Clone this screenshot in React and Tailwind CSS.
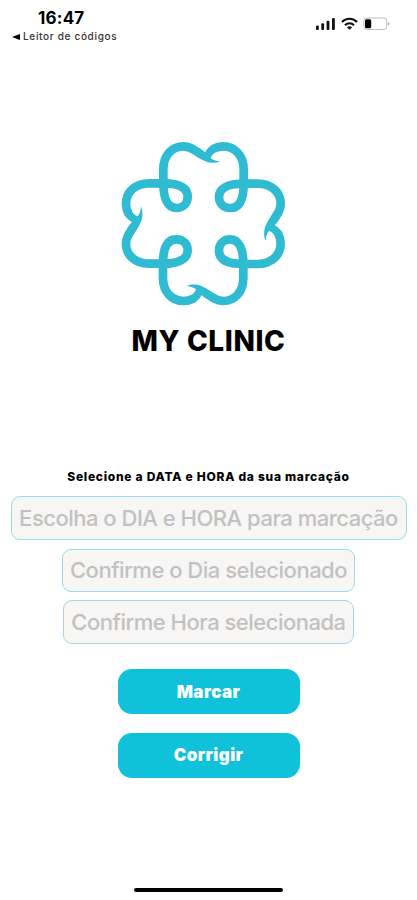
const StatusBar = () => {
  return (
    <header className="h-[48px] flex justify-between pl-[12px] pr-[27px]">
      <div className="w-[106px] pt-[8px]">
        <div className="pl-[26px] text-[17px] leading-[20px] font-bold tracking-[0.2px] whitespace-nowrap">
          16:47
        </div>
        <div className="flex items-center gap-[3px] h-[17px] text-[10px] leading-[17px] font-medium tracking-[0.68px] text-[#333] whitespace-nowrap">
          <svg width="8" height="6" viewBox="0 0 8 6" className="shrink-0">
            <path d="M0 3 L8 0 V6 Z" fill="#000" />
          </svg>
          <span>Leitor de códigos</span>
        </div>
      </div>
      <div className="flex items-start gap-[5px] pt-[17px]">
        <svg width="20" height="14" viewBox="0 0 20 14" fill="#111">
          <rect x="0" y="8.5" width="2.8" height="4.5" rx="1" />
          <rect x="5.3" y="6.3" width="2.8" height="6.7" rx="1" />
          <rect x="10.6" y="3.7" width="2.8" height="9.3" rx="1" />
          <rect x="16" y="1" width="2.8" height="12" rx="1" />
        </svg>
        <svg width="17" height="14" viewBox="0 0 17 14" fill="none" stroke="#111" strokeWidth="2.1">
          <path d="M1 5 C5 0.6 12 0.6 16 5" />
          <path d="M4 8.2 C6.5 5.6 10.5 5.6 13 8.2" />
          <path d="M8.5 12.8 L6 10.4 C7.4 9 9.6 9 11 10.4 Z" fill="#111" stroke="none" />
        </svg>
        <svg width="27" height="14" viewBox="0 0 27 14">
          <rect x="0.8" y="1" width="23" height="11.5" rx="3" fill="none" stroke="#bcbcbc" />
          <rect x="2" y="2.3" width="6.2" height="9" rx="1.5" fill="#000" />
          <path d="M25 5 C26.8 5.7 26.8 7.8 25 8.5 Z" fill="#aaa" />
        </svg>
      </div>
    </header>
  );
};

// One petal and the loop that leads to the next one
const Petal = ({ angle }) => (
  <g transform={`rotate(${angle} 280 281)`}>
    <path d="M160 160 V118 C160 75 187 49 220 49 C233 49 242 53 251 59" />
    <path d="M311 56 C320 51 330 49 339 49 C376 49 401 78 401 118 V161 C401 214 386 234 361 234 C341 234 327 220 327 201 C327 173 358 161 401 161" />
    <path
      d="M250 44 C265 51 276 58 285 67 C290 58 296 51 306 44 L320 65 C311 69 304 76 302 84 C310 91 320 93 331 94 C322 99 302 101 286 94 C268 86 256 77 242 69 Z"
      fill="#2fbcd2"
      stroke="none"
    />
  </g>
);

const Logo = () => (
  <svg
    width="190"
    height="190"
    viewBox="0 0 570 570"
    fill="none"
    stroke="#2fbcd2"
    strokeWidth="26"
  >
    <Petal angle={0} />
    <Petal angle={90} />
    <Petal angle={180} />
    <Petal angle={270} />
  </svg>
);

const App = () => {
  return (
    <div className="w-[417px] h-[900px] overflow-hidden bg-white text-black font-['Inter','Liberation_Sans',sans-serif] flex flex-col">
      <StatusBar />

      <main className="flex-1 flex flex-col items-center pt-[82px]">
        <div className="pr-[7px]">
          <Logo />
        </div>
        <h1 className="h-[42px] text-[28px] leading-[42px] font-extrabold tracking-[0.6px] whitespace-nowrap">
          MY CLINIC
        </h1>

        <p className="mt-[105px] h-[20px] text-[12px] leading-[20px] font-extrabold tracking-[0.72px] whitespace-nowrap">
          Selecione a DATA e HORA da sua marcação
        </p>

        <div className="mt-[9px] flex flex-col items-center text-[22px] font-medium tracking-[-0.5px] text-[#c1c1c1] whitespace-nowrap">
          <div className="w-[396px] h-[44px] rounded-[9px] border border-[#9edbe4] bg-[#f7f6f5] flex items-center justify-center">
            Escolha o DIA e HORA para marcação
          </div>
          <div className="mt-[9px] w-[293px] h-[43px] rounded-[9px] border border-[#9edbe4] bg-[#f7f6f5] flex items-center justify-center">
            Confirme o Dia selecionado
          </div>
          <div className="mt-[8px] w-[291px] h-[44px] rounded-[9px] border border-[#9edbe4] bg-[#f7f6f5] flex items-center justify-center">
            Confirme Hora selecionada
          </div>
        </div>

        <div className="mt-[25px] flex flex-col gap-[19px] text-[17px] font-black tracking-[0.4px] text-white">
          <button className="w-[182px] h-[45px] pt-[2px] rounded-[14px] bg-[#10c1da]">
            Marcar
          </button>
          <button className="w-[182px] h-[45px] pt-[1px] rounded-[14px] bg-[#10c1da]">
            Corrigir
          </button>
        </div>
      </main>

      <footer className="h-[12px] flex justify-center">
        <div className="w-[149px] h-[4px] rounded-full bg-black" />
      </footer>
    </div>
  );
};

export default App;
